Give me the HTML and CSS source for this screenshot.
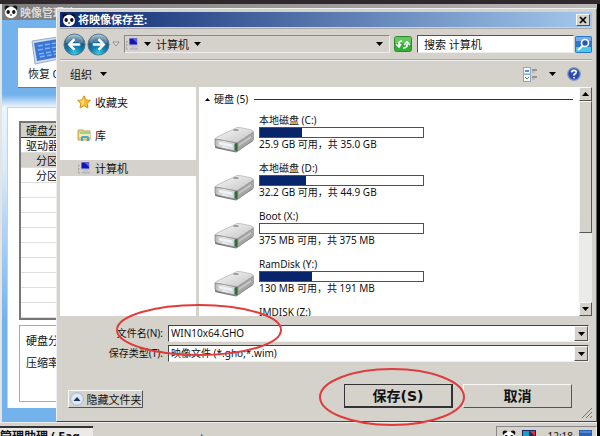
FILE: index.html
```html
<!DOCTYPE html>
<html lang="zh-CN">
<head>
<meta charset="utf-8">
<title>将映像保存至</title>
<link rel="stylesheet" href="styles.css">
</head>
<body>
<svg width="0" height="0" class="defs" aria-hidden="true">
  <defs>
    <linearGradient id="top" x1="0" y1="0" x2="1" y2="1"><stop offset="0" stop-color="#fafafa"/><stop offset=".5" stop-color="#dedede"/><stop offset="1" stop-color="#c2c2c2"/></linearGradient>
    <linearGradient id="front" x1="0" y1="0" x2="1" y2="0"><stop offset="0" stop-color="#b4b4b4"/><stop offset=".4" stop-color="#fafafe"/><stop offset="1" stop-color="#c8c8cc"/></linearGradient>
    <radialGradient id="orb" cx=".5" cy=".95" r=".9"><stop offset="0" stop-color="#35d0e8"/><stop offset=".4" stop-color="#1180b0"/><stop offset=".75" stop-color="#1c5880"/><stop offset="1" stop-color="#8fb0c4"/></radialGradient>
    <symbol id="panda" viewBox="0 0 14 14">
      <circle cx="3" cy="3" r="2.4" fill="#111"/><circle cx="11" cy="3" r="2.4" fill="#111"/>
      <ellipse cx="7" cy="7.5" rx="6" ry="5.7" fill="#fff"/>
      <ellipse cx="4.2" cy="7" rx="1.7" ry="2.1" fill="#111"/><ellipse cx="9.8" cy="7" rx="1.7" ry="2.1" fill="#111"/>
      <ellipse cx="7" cy="10" rx="1" ry=".7" fill="#222"/>
    </symbol>
    <symbol id="pc" viewBox="0 0 14 14">
      <path d="M1.500 4v8M1 4.500h2M1 8h2M1 12h2" stroke="#aaa" stroke-dasharray="2 1" fill="none"/>
      <rect x="4" y="1" width="9" height="8" fill="#b8bcd8"/><rect x="4.500" y="1.500" width="7.500" height="6" fill="#1812b4"/>
      <path d="M8 2h4v4z" fill="#5468e0"/><path d="M6 9h5l2 3H5z" fill="#c3c5d4"/><path d="M5 12h8" stroke="#a4a8c0"/>
    </symbol>
    <symbol id="drive" viewBox="0 0 40 28">
      <path d="M1 17v4q0 1 2 1.500L22 26.500 39 15v-3z" fill="#777"/>
      <path d="M1 13Q1 12 3 11L22 2q2-1 4-.500L38 4q2 1 1 3L23 17z" fill="url(#top)" stroke="#b0b0b0" stroke-width=".7"/>
      <path d="M1 13l22 4v8.500L3 21Q1 20.500 1 18z" fill="url(#front)" stroke="#888" stroke-width=".8"/>
      <path d="M4 15l15 3v4L5 19z" fill="#f0f0f8" stroke="#bbb" stroke-width=".5"/>
      <path d="M23 17L39.500 6v8L23 25.500z" fill="#a6a6a6" stroke="#888" stroke-width=".6"/>
      <path d="M25 18l12-8v2l-12 8z" fill="#c8c8c8"/>
      <path d="M20.500 17.500l3-.5v8l-3-.5z" fill="#2f6b33"/><ellipse cx="22" cy="4" rx="3" ry="1" fill="#999"/>
    </symbol>
    <symbol id="down" viewBox="0 0 7 4"><path d="M0 0h7L3.500 4z" fill="#000"/></symbol>
    <symbol id="up" viewBox="0 0 7 4"><path d="M0 4h7L3.500 0z" fill="#000"/></symbol>
  </defs>
</svg>

<main class="desktop">
  <section class="back-window">
    <header class="back-title"><svg class="i14"><use href="#panda"/></svg><span>映像管理助</span></header>
    <div class="back-body">
      <button class="restore" type="button">
        <svg viewBox="0 0 36 32" width="36" height="32"><path d="M2 6L34 1v22L5 29z" fill="#d2dcec" stroke="#9cacc4"/><path d="M4 8l30-5v18L7 26z" fill="#3a74d6"/><path d="M8 11l24-4M8 15l24-4M9 19l23-4M10 22l22-4" stroke="#80b4f4" stroke-width="1.500" stroke-dasharray="5 2"/></svg>
        <span>恢复 0</span>
      </button>
      <div class="back-panel">
        <table class="parts">
          <thead><tr><th>硬盘分</th></tr></thead>
          <tbody>
            <tr><td>驱动器</td></tr>
            <tr class="sel"><td class="sub">分区</td></tr>
            <tr><td class="sub">分区</td></tr>
            <tr><td></td></tr><tr><td></td></tr><tr><td></td></tr><tr><td></td></tr><tr><td></td></tr><tr><td></td></tr><tr><td></td></tr><tr><td></td></tr><tr><td></td></tr>
          </tbody>
        </table>
        <div class="options"><span>硬盘分</span><span>压缩率</span></div>
      </div>
    </div>
  </section>

  <section class="dialog" role="dialog" aria-labelledby="dlg-title">
    <header class="title">
      <svg class="i14"><use href="#panda"/></svg>
      <h1 id="dlg-title">将映像保存至:</h1>
      <button class="close raised" type="button" aria-label="关闭"><svg viewBox="0 0 8 8" width="8" height="8"><path d="M1 1l6 6M7 1L1 7" stroke="#000" stroke-width="1.700"/></svg></button>
    </header>

    <nav class="navbar">
      <div class="orbs">
        <button type="button" aria-label="后退"><svg viewBox="0 0 24 24" width="23" height="23"><circle cx="12" cy="12" r="11" fill="url(#orb)" stroke="#50728a"/><path d="M2.500 11a9.500 9.500 0 0 1 19 0Q12 8 2.500 11z" fill="#fff" opacity=".25"/><path d="M18 12H7M12 6.500L6.500 12l5.500 5.500" fill="none" stroke="#fff" stroke-width="2.600"/></svg></button>
        <button type="button" aria-label="前进"><svg viewBox="0 0 24 24" width="23" height="23"><circle cx="12" cy="12" r="11" fill="url(#orb)" stroke="#50728a"/><path d="M2.500 11a9.500 9.500 0 0 1 19 0Q12 8 2.500 11z" fill="#fff" opacity=".25"/><path d="M6 12h11M12 6.500l5.500 5.500-5.500 5.500" fill="none" stroke="#fff" stroke-width="2.600"/></svg></button>
        <svg viewBox="0 0 8 6" width="8" height="6"><path d="M1 1h6L4 5z" fill="#eee" stroke="#888"/></svg>
      </div>
      <div class="address">
        <svg class="i14"><use href="#pc"/></svg>
        <svg class="arrow"><use href="#down"/></svg>
        <span>计算机</span>
        <svg class="arrow"><use href="#down"/></svg>
        <svg class="arrow last"><use href="#down"/></svg>
      </div>
      <button class="refresh" type="button" aria-label="刷新"><svg viewBox="0 0 18 16" width="18" height="16"><rect x=".5" y=".5" width="17" height="15" rx="2" fill="#35ae38" stroke="#2b8a2c"/><path d="M1 1h16v6H1z" fill="#83d47d" opacity=".6"/><path d="M5 10V7q0-2 3-2M2 8l3 3 2-3M13 11V8M10 9l3-3 3 3M13 9q0 3-4 3" stroke="#fff" stroke-width="1.600" fill="none"/></svg></button>
      <input class="search" type="text" value="搜索 计算机" aria-label="搜索">
      <button class="go" type="button" aria-label="搜索"><svg viewBox="0 0 17 17" width="17" height="17"><rect width="17" height="17" rx="2" fill="#2778d0"/><path d="M1 11h15v5H1z" fill="#4bc5ee"/><path d="M1 1h15v4H1z" fill="#7ba8e8"/><circle cx="10" cy="7" r="3.500" fill="#2458b8" stroke="#fff" stroke-width="1.600"/><path d="M7.500 10L3 14" stroke="#fff" stroke-width="2.200"/></svg></button>
    </nav>

    <div class="toolbar">
      <button type="button">组织 <svg class="arrow"><use href="#down"/></svg></button>
      <div class="tools">
        <button type="button" aria-label="视图"><svg viewBox="0 0 15 15" width="15" height="15"><rect x=".5" y=".5" width="7" height="6.500" fill="#f4f8fc" stroke="#88aac8"/><rect x=".5" y="7.500" width="7" height="7" fill="#f4f8fc" stroke="#88aac8"/><path d="M2 4h4" stroke="#246cc0" stroke-width="1.500"/><path d="M2 10l2 2 2-2" stroke="#4b8b34" fill="none"/><path d="M9 3h5M9 10h5" stroke="#555"/><path d="M9 5h3M9 12h3" stroke="#aaa"/></svg></button>
        <button type="button" aria-label="更多视图"><svg class="arrow"><use href="#down"/></svg></button>
        <button type="button" aria-label="帮助"><svg viewBox="0 0 14 14" width="14" height="14"><circle cx="7" cy="7" r="6.300" fill="#2b4cac" stroke="#8c9dc8" stroke-width="1.200"/><path d="M3 5a4.500 4.500 0 0 1 8 0z" fill="#6f8fd8"/><path d="M4.800 5.500q0-2.200 2.200-2.200t2.200 1.900Q9.200 6.500 7 7.500v1.200M7 10v1.500" stroke="#fff" stroke-width="1.500" fill="none"/></svg></button>
      </div>
    </div>

    <div class="content">
      <ul class="places">
        <li><svg viewBox="0 0 14 14" width="14" height="14"><path d="M7 .8l1.900 4.100 4.500.5-3.300 3 .9 4.600-4-2.300L3 13l.9-4.600-3.300-3 4.500-.5z" fill="#fbbd2c" stroke="#d99018"/><path d="M7 3v6L4 11l1-3-2-2 2.500-.5z" fill="#ffe27c"/></svg><span>收藏夹</span></li>
        <li><svg viewBox="0 0 14 14" width="14" height="14"><path d="M1 2h5l1 1h6v9H1z" fill="#efcf74" stroke="#c6a450"/><path d="M3 4h9v5H3z" fill="#97d388"/><path d="M2 6h11v3H2z" fill="#fae8ac"/><path d="M4 13V9.500Q4 8 5.500 8h5Q12 8 12 9.500V13h-2v-3H6v3z" fill="#4ba7cc"/></svg><span>库</span></li>
        <li class="current"><svg class="i14"><use href="#pc"/></svg><span>计算机</span></li>
      </ul>
      <div class="files">
        <h2><svg class="up-arrow"><use href="#up"/></svg>硬盘 (5)</h2>
        <ul class="drives">
          <li><svg class="drive"><use href="#drive"/></svg><div><span>本地磁盘 (C:)</span><div class="bar"><i style="width:26%"></i></div><span>25.9 GB 可用，共 35.0 GB</span></div></li>
          <li><svg class="drive"><use href="#drive"/></svg><div><span>本地磁盘 (D:)</span><div class="bar"><i style="width:28%"></i></div><span>32.2 GB 可用，共 44.9 GB</span></div></li>
          <li><svg class="drive"><use href="#drive"/></svg><div><span>Boot (X:)</span><div class="bar"><i style="width:0%"></i></div><span>375 MB 可用，共 375 MB</span></div></li>
          <li><svg class="drive"><use href="#drive"/></svg><div><span>RamDisk (Y:)</span><div class="bar"><i style="width:32%"></i></div><span>130 MB 可用，共 191 MB</span></div></li>
          <li class="no-icon"><div><span>IMDISK (Z:)</span></div></li>
        </ul>
      </div>
      <div class="scroll">
        <button class="raised" type="button" aria-label="向上滚动"><svg class="arrow"><use href="#up"/></svg></button>
        <div class="thumb raised"></div>
        <button class="raised" type="button" aria-label="向下滚动"><svg class="arrow"><use href="#down"/></svg></button>
      </div>
    </div>

    <form class="fields">
      <label for="name">文件名(N):</label>
      <div class="combo"><input id="name" type="text" value="WIN10x64.GHO"><button class="raised" type="button" aria-label="历史文件名"><svg class="arrow"><use href="#down"/></svg></button></div>
      <label for="type">保存类型(T):</label>
      <div class="combo"><select id="type"><option>映像文件 (*.gho;*.wim)</option></select><span class="raised drop"><svg class="arrow"><use href="#down"/></svg></span></div>
    </form>

    <footer class="actions">
      <button class="hide raised" type="button"><svg viewBox="0 0 14 14" width="14" height="14"><circle cx="7" cy="7" r="6.300" fill="#dce8f6" stroke="#a4b8d0"/><path d="M3.500 9L7 5l3.500 4z" fill="#1c3050"/></svg>隐藏文件夹</button>
      <button class="save big raised" type="button">保存(S)</button>
      <button class="cancel big raised" type="button">取消</button>
      <svg class="grip" viewBox="0 0 10 10" width="10" height="10"><path d="M0 10L10 0M4 10l6-6M8 10l2-2" stroke="#777"/></svg>
    </footer>
  </section>
</main>

<footer class="taskbar">
  <button class="task" type="button">管理助理 ( Eag</button>
  <svg class="marker" viewBox="0 0 6 12" width="6" height="12"><path d="M2 12V7l2 3" stroke="#2c4474" fill="none" stroke-width="1.500"/></svg>
  <div class="tray">
    <svg class="i14"><use href="#panda"/></svg>
    <svg viewBox="0 0 14 14" width="14" height="14"><rect width="14" height="14" fill="#1c2860"/><path d="M1 1h6v5H1z" fill="#18a0c8"/><path d="M7 1h6v5z" fill="#e02c3c"/><path d="M1 6h6v7z" fill="#2c48e0"/><path d="M7 6h6v7z" fill="#28b040"/></svg>
    <time>12:18</time>
    <svg viewBox="0 0 13 14" width="13" height="14"><path d="M0 0h13v14H0z" fill="#2b60b4"/><path d="M1 1h11v2H1z" fill="#5085d0"/></svg>
  </div>
</footer>

<svg class="ring ring-name" viewBox="0 0 168 54" preserveAspectRatio="none" aria-hidden="true"><ellipse cx="84" cy="27" rx="82" ry="25"/></svg>
<svg class="ring ring-save" viewBox="0 0 148 60" preserveAspectRatio="none" aria-hidden="true"><ellipse cx="74" cy="30" rx="72" ry="28"/></svg>
</body>
</html>
```
FILE: styles.css
```css
* { box-sizing: border-box; }

body {
  margin: 0;
  height: 100vh;
  display: flex;
  flex-direction: column;
  overflow: hidden;
  background: #000;
  color: #111;
  font: 11px/13px "Noto Sans", "Noto Sans CJK SC", sans-serif;
}

button, input, select {
  font: inherit;
  color: inherit;
  padding: 0;
  margin: 0;
  border: 0;
  border-radius: 0;
  background: none;
}

svg { display: block; flex: none; }
ul { list-style: none; margin: 0; padding: 0; }
h1, h2 { margin: 0; font-size: 11px; }

.defs { position: absolute; }
.i14 { width: 14px; height: 14px; }
.arrow { width: 7px; height: 4px; }

.raised {
  background: #d5d2cc;
  border: 1px solid;
  border-color: #f8f8f6 #555 #555 #f8f8f6;
  display: flex;
  align-items: center;
  justify-content: center;
}

.desktop {
  flex: 1;
  position: relative;
  min-height: 0;
  border-top: 4px solid #30282c;
}

/* Window behind the dialog */
.back-window {
  position: absolute;
  inset: 0 3px 0 0;
  border-left: 2px solid #e4e4e4;
  background: #74b2ec;
  display: flex;
  flex-direction: column;
}

.back-title {
  height: 16px;
  padding-left: 2px;
  display: flex;
  align-items: center;
  gap: 2px;
  background: linear-gradient(90deg, #7c7c7c, #b8b8b6);
  color: #dcdad6;
  font-size: 11px;
  font-weight: bold;
}

.back-body {
  flex: 1;
  padding: 8px 0 14px 5px;
  display: flex;
  flex-direction: column;
  background: linear-gradient(#74b2ec 75px, #edf5fc 87px, #d9eafa 150px, #74b2ec 300px);
}

.restore {
  width: 80px;
  height: 60px;
  margin-left: 11px;
  padding-left: 12px;
  flex: none;
  background: #fff;
  border-bottom: 1px solid #777;
  text-align: left;
  white-space: nowrap;
}
.restore span { display: block; margin-left: -2px; }

.back-panel {
  flex: 1;
  margin-top: 19px;
  padding: 13px 0 6px 11px;
  background: #fff;
  border-left: 1px solid #c8d2da;
  border-top: 1px solid #ccd4d8;
  display: flex;
  flex-direction: column;
  gap: 5px;
}

.parts {
  width: 100px;
  border: 2px solid #777;
  border-collapse: separate;
  border-spacing: 0;
  white-space: nowrap;
}
.parts th, .parts td {
  height: 15px;
  padding: 0 0 0 5px;
  border-bottom: 1px solid #ddd;
  font-weight: normal;
  text-align: left;
  line-height: 13px;
}
.parts th { background: #d4d1cb; border-bottom-color: #333; }
.parts .sub { padding-left: 15px; }
.parts .sel { background: #d4d1cb; }

.options {
  flex: 1;
  width: 100px;
  padding: 8px 6px;
  border: 1px solid #aaa;
  display: flex;
  flex-direction: column;
  gap: 9px;
}

/* Save dialog */
.dialog {
  position: absolute;
  inset: 4px 3px 0 56px;
  padding: 3px 4px 3px 3px;
  display: flex;
  flex-direction: column;
  background: #d5d2cc;
  border: 1px solid;
  border-color: #eee #666 #444 #eee;
}

.title {
  height: 15px;
  padding: 0 2px 0 2px;
  display: flex;
  align-items: center;
  gap: 2px;
  background: linear-gradient(90deg, #0c2870, #a4c8ee);
  color: #fff;
}
.title h1 { flex: 1; }
.close { width: 14px; height: 12px; }

.navbar {
  height: 32px;
  margin-top: 1px;
  display: flex;
  align-items: center;
  border-top: 1px solid #aaa;
  border-bottom: 1px solid #aaa;
}
.orbs { display: flex; align-items: center; gap: 1px; padding: 0 4px 0 3px; }
.orbs > svg { margin-left: 1px; }

.address {
  flex: 1;
  height: 18px;
  padding-right: 6px;
  display: flex;
  align-items: center;
  gap: 5px;
  border: 1px solid;
  border-color: #888 #eee #eee #888;
}
.address .last { margin-left: auto; }
.refresh { margin: 0 5px 0 4px; }

.search {
  width: 157px;
  height: 18px;
  padding-left: 6px;
  background: #fff;
  border: 1px solid;
  border-color: #555 #eee #eee #555;
}
.go { margin-left: 1px; }

.toolbar {
  height: 27px;
  padding: 0 11px 0 10px;
  display: flex;
  align-items: center;
  justify-content: space-between;
  border-top: 1px solid #eee;
}
.toolbar button { display: flex; align-items: center; gap: 8px; }
.tools { display: flex; align-items: center; gap: 11px; }

.content {
  flex: 1;
  min-height: 0;
  display: flex;
  background: #fff;
}

.places {
  width: 139px;
  padding-top: 7px;
  display: flex;
  flex-direction: column;
  gap: 17px;
  border-right: 3px solid #d5d2cc;
}
.places li {
  height: 16px;
  padding: 1px 0 1px 17px;
  display: flex;
  align-items: center;
  gap: 4px;
}
.places .current { background: #d5d2cc; }

.files {
  flex: 1;
  min-width: 0;
  padding: 6px 6px 0;
  overflow: hidden;
  font-size: 10px;
}
.files h2 {
  display: flex;
  align-items: center;
  gap: 4px;
  font-size: 10px;
  font-weight: normal;
}
.files h2::after { content: ""; flex: 1; height: 1px; background: #333; margin-left: 2px; }
.up-arrow { width: 5px; height: 3px; }

.drives { padding: 8px 0 0 9px; }
.drives li { height: 48px; display: flex; gap: 5px; white-space: nowrap; }
.drives span { display: block; }
.drives li > div { width: 165px; }
.drive { width: 40px; height: 28px; margin-top: 12px; }
.drives .no-icon { padding-left: 45px; }

.bar { height: 11px; border: 1px solid #444c80; background: #fff; }
.bar i { display: block; height: 100%; background: #08246b; }

.scroll {
  width: 13px;
  display: flex;
  flex-direction: column;
  background: #ebebea;
}
.scroll button { height: 14px; }
.thumb { height: 132px; margin-bottom: auto; }

.fields {
  padding: 9px 3px 0 0;
  display: grid;
  grid-template-columns: 103px 1fr;
  gap: 3px 5px;
  align-items: center;
  font-size: 10px;
}
.fields label { text-align: right; white-space: nowrap; }
.combo {
  height: 17px;
  display: flex;
  background: #fff;
  border: 1px solid;
  border-color: #444 #eee #eee #444;
}
.combo input, .combo select {
  flex: 1;
  min-width: 0;
  padding: 0 2px;
  appearance: none;
}
.combo .raised { width: 14px; flex: none; }
.combo select { margin-right: -14px; }
.combo .drop { pointer-events: none; position: relative; }

.actions {
  height: 56px;
  padding: 0 20px 10px 8px;
  display: flex;
  align-items: flex-end;
  gap: 10px;
  position: relative;
}
.hide { height: 18px; width: 75px; gap: 3px; margin-right: auto; white-space: nowrap; }
.big {
  width: 109px;
  height: 24px;
  font: bold 14px/18px "DejaVu Sans", "Noto Sans CJK SC", sans-serif;
}
.save { border-color: #333; border-width: 1px 2px 2px 1px; }
.grip { position: absolute; right: 0; bottom: 0; }

/* Taskbar */
.taskbar {
  height: 14px;
  display: flex;
  align-items: flex-start;
  overflow: hidden;
  background: #d5d2cc;
  border-top: 1px solid #eee;
  margin-right: 3px;
}
.task {
  width: 93px;
  height: 18px;
  margin-top: 3px;
  border-top: 2px solid #333;
  background: #eceae7;
  font-size: 12px;
  font-weight: bold;
  text-align: left;
  white-space: nowrap;
}
.marker { margin-left: 107px; margin-top: 6px; }
.tray {
  margin: 3px 0 0 auto;
  height: 22px;
  padding: 3px 4px 0 5px;
  display: flex;
  align-items: flex-start;
  gap: 6px;
  border: 1px solid;
  border-color: #888 #eee #eee #888;
  font-size: 10px;
}
.tray time { padding-left: 5px; }

/* Highlights over the window */
.ring { position: absolute; fill: none; stroke: #e03c3c; stroke-width: 2; pointer-events: none; }
.ring-name { left: 115px; top: 303px; width: 168px; height: 54px; }
.ring-save { left: 318px; top: 367px; width: 148px; height: 60px; }
```
